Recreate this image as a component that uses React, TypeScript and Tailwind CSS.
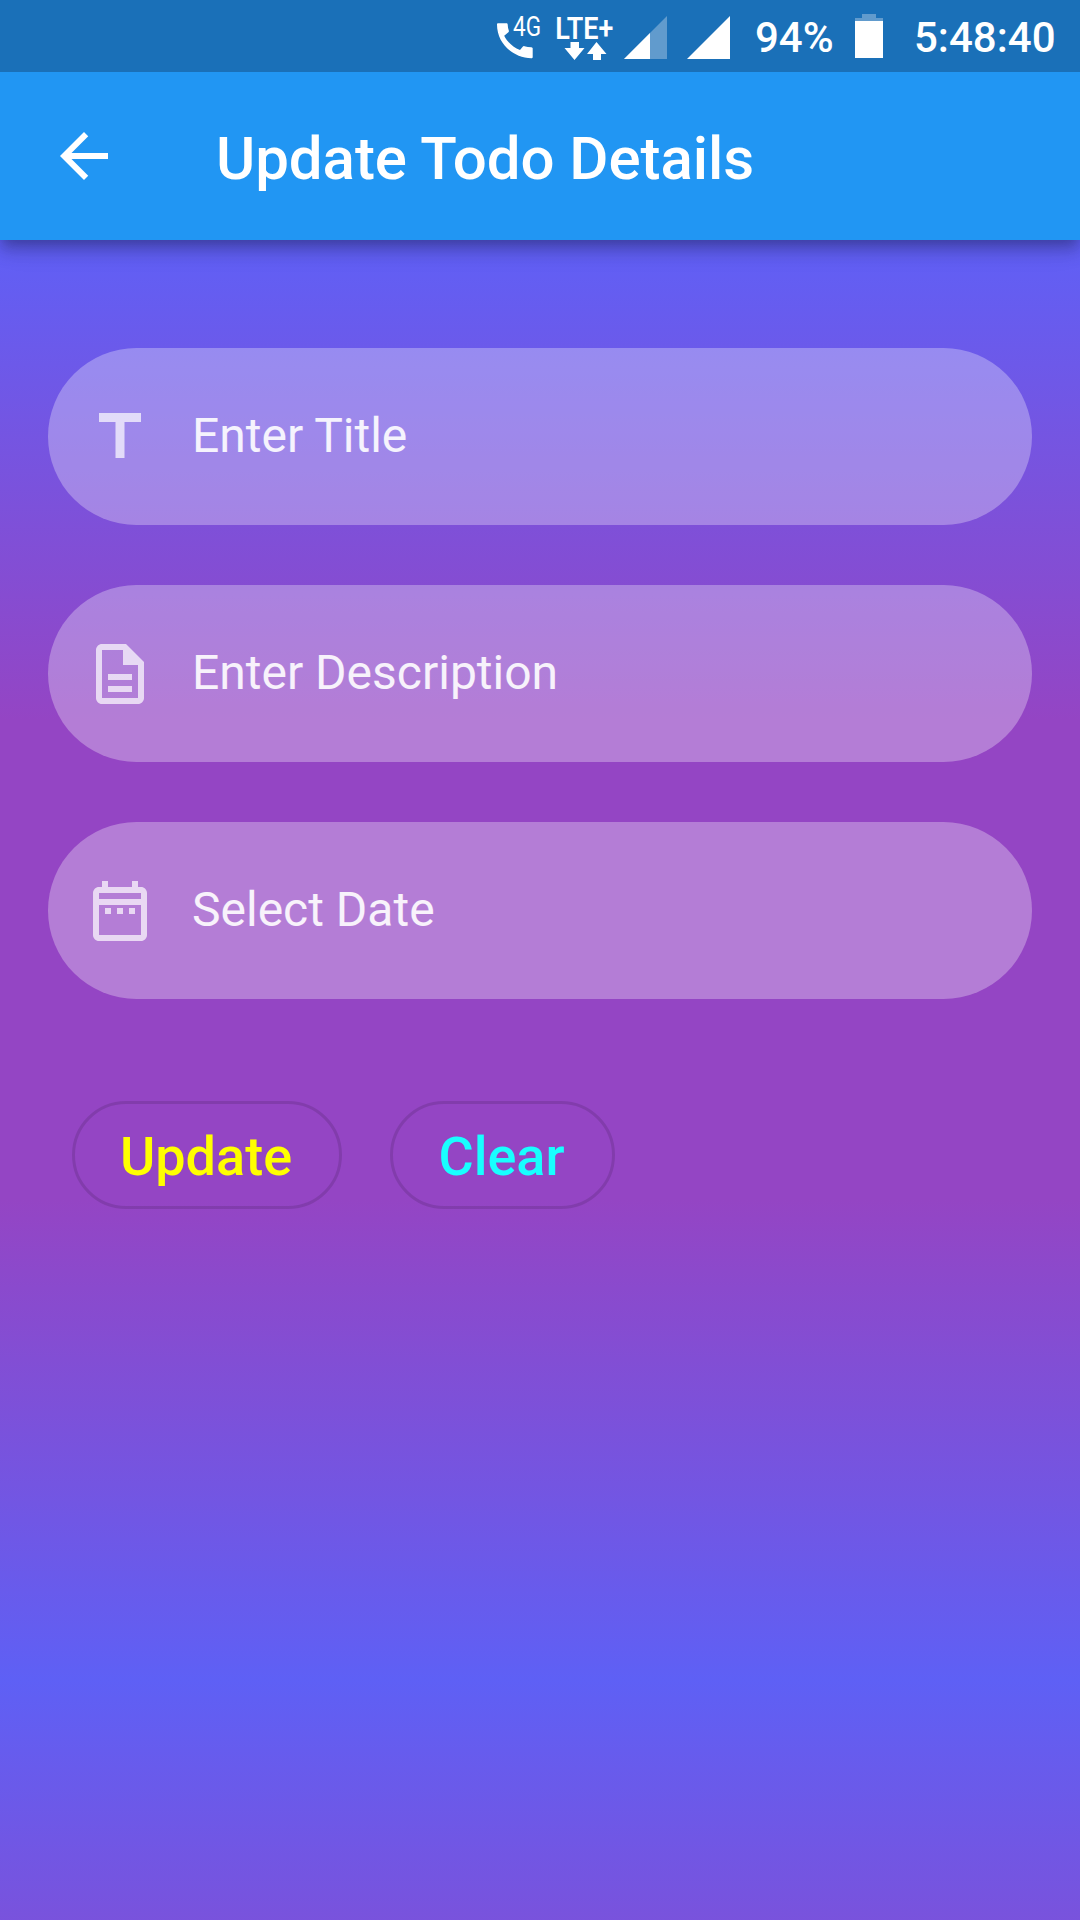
import React from "react";

const ICONS = {
  back: "M20 11H7.83l5.59-5.59L12 4l-8 8 8 8 1.41-1.41L7.83 13H20v-2z",
  title: "M5 4v3h5.5v12h3V7H19V4z",
  description:
    "M8 16h8v2H8zm0-4h8v2H8zm6-10H6c-1.1 0-2 .9-2 2v16c0 1.1.89 2 1.99 2H18c1.1 0 2-.9 2-2V8l-6-6zm4 18H6V4h7v5h5v11z",
  date: "M7 11h2v2H7v-2zm14-5v14c0 1.1-.9 2-2 2H5c-1.11 0-2-.9-2-2l.01-14c0-1.1.88-2 1.99-2h1V2h2v2h8V2h2v2h1c1.1 0 2 .9 2 2zM5 8h14V6H5v2zm14 12V10H5v10h14zm-4-7h2v-2h-2v2zm-4 0h2v-2h-2v2z",
};

function Icon({ path, className }: { path: string; className: string }) {
  return (
    <svg viewBox="0 0 24 24" fill="currentColor" className={className}>
      <path d={path} />
    </svg>
  );
}

function StatusBar() {
  return (
    <div className="relative z-10 flex h-[72px] shrink-0 items-start bg-[#1a70b8] pl-[496px] text-[42px] leading-[72px] font-medium text-white">
      {/* Voice call over 4G */}
      <svg width="48" height="72" viewBox="0 0 48 72" fill="white" className="shrink-0 overflow-visible">
        <path d="M2.200 23.200h8.200c.8 0 1.200.5 1.300 1.200.1 2.200.4 4.200 1.100 6.200.2.700.1 1.200-.4 1.700L8.200 35.800c3.200 6.400 8.800 11.400 15.800 14.200l2.700-3.300c.5-.5 1.100-.7 1.700-.5 2.200.6 4.700 1 7 1.100.8.100 1.300.6 1.300 1.300v8.400c0 .8-.5 1.300-1.300 1.300C17 58 1 43.500 1 24.500c0-.8.400-1.300 1.200-1.300z" />
        <text x="17" y="36" fontSize="27" fontFamily="Roboto, sans-serif" fontWeight="400" textLength="28" lengthAdjust="spacingAndGlyphs">4G</text>
      </svg>
      {/* LTE+ data activity */}
      <svg width="76" height="72" viewBox="0 0 76 72" fill="white" className="shrink-0 overflow-visible">
        <text x="11.300" y="39" fontSize="31" fontFamily="Roboto, sans-serif" fontWeight="600" textLength="58" lengthAdjust="spacingAndGlyphs">LTE+</text>
        <path d="M26.500 42h8.500v6h5.500L30.500 60 20.500 48h6zM49 60v-6h-6l9.500-12L62.500 54H57v6z" />
      </svg>
      <svg width="64" height="72" viewBox="0 0 64 72" className="shrink-0">
        <path d="M47 16v43H4z" fill="#619bcd" />
        <path d="M30 33v26H4z" fill="white" />
      </svg>
      <svg width="48" height="72" viewBox="0 0 48 72" className="shrink-0">
        <path d="M46 16v43H3z" fill="white" />
      </svg>
      <span className="ml-[23px] w-[100px] shrink-0 pt-[2px]">94%</span>
      <svg width="28" height="72" viewBox="0 0 28 72" className="shrink-0">
        <path d="M7 14h14v4h7v3H0v-3h7z" fill="#619bcd" />
        <path d="M0 21h28v37H0z" fill="white" />
      </svg>
      <span className="ml-[31px] shrink-0 pt-[2px]">5:48:40</span>
    </div>
  );
}

function Field({ icon, label }: { icon: string; label: string }) {
  return (
    <div className="flex h-[177px] items-center rounded-[90px] bg-white/30 pl-9">
      <Icon path={icon} className="size-[72px] text-white/70" />
      <span className="ml-9 pb-[2px] text-[48px] leading-[56px] text-white/90">{label}</span>
    </div>
  );
}

export default function App() {
  return (
    <div className="flex h-[1920px] w-[1080px] flex-col overflow-hidden bg-[linear-gradient(to_bottom,#5f60f6_240px,#9445c4_720px,#9445c4_1200px,#5e60f5_1680px,#9445c4_2160px)] font-[Roboto,sans-serif]">
      <StatusBar />
      <header className="flex h-[168px] shrink-0 items-center bg-[#2196f3] pl-12 shadow-[0_6px_12px_-3px_rgba(0,0,0,0.2),0_12px_15px_0_rgba(0,0,0,0.14),0_3px_30px_0_rgba(0,0,0,0.12)]">
        <Icon path={ICONS.back} className="size-[72px] text-white" />
        <h1 className="ml-24 pt-[6px] text-[60px] leading-[70px] font-medium tracking-[-0.06px] text-white">Update Todo Details</h1>
      </header>
      <main className="flex flex-col px-12 pt-[108px]">
        <div className="flex flex-col gap-[60px]">
          <Field icon={ICONS.title} label="Enter Title" />
          <Field icon={ICONS.description} label="Enter Description" />
          <Field icon={ICONS.date} label="Select Date" />
        </div>
        <div className="mt-[102px] ml-6 flex gap-12">
          <button className="flex h-[108px] w-[270px] items-center justify-center rounded-full border-[3px] border-black/12 pt-[2px] pr-[2px] text-[54px] font-medium text-[#ffff00]">
            Update
          </button>
          <button className="flex h-[108px] w-[225px] items-center justify-center rounded-full border-[3px] border-black/12 pt-[2px] pr-[2px] text-[54px] font-medium text-[#18ffff]">
            Clear
          </button>
        </div>
      </main>
    </div>
  );
}
